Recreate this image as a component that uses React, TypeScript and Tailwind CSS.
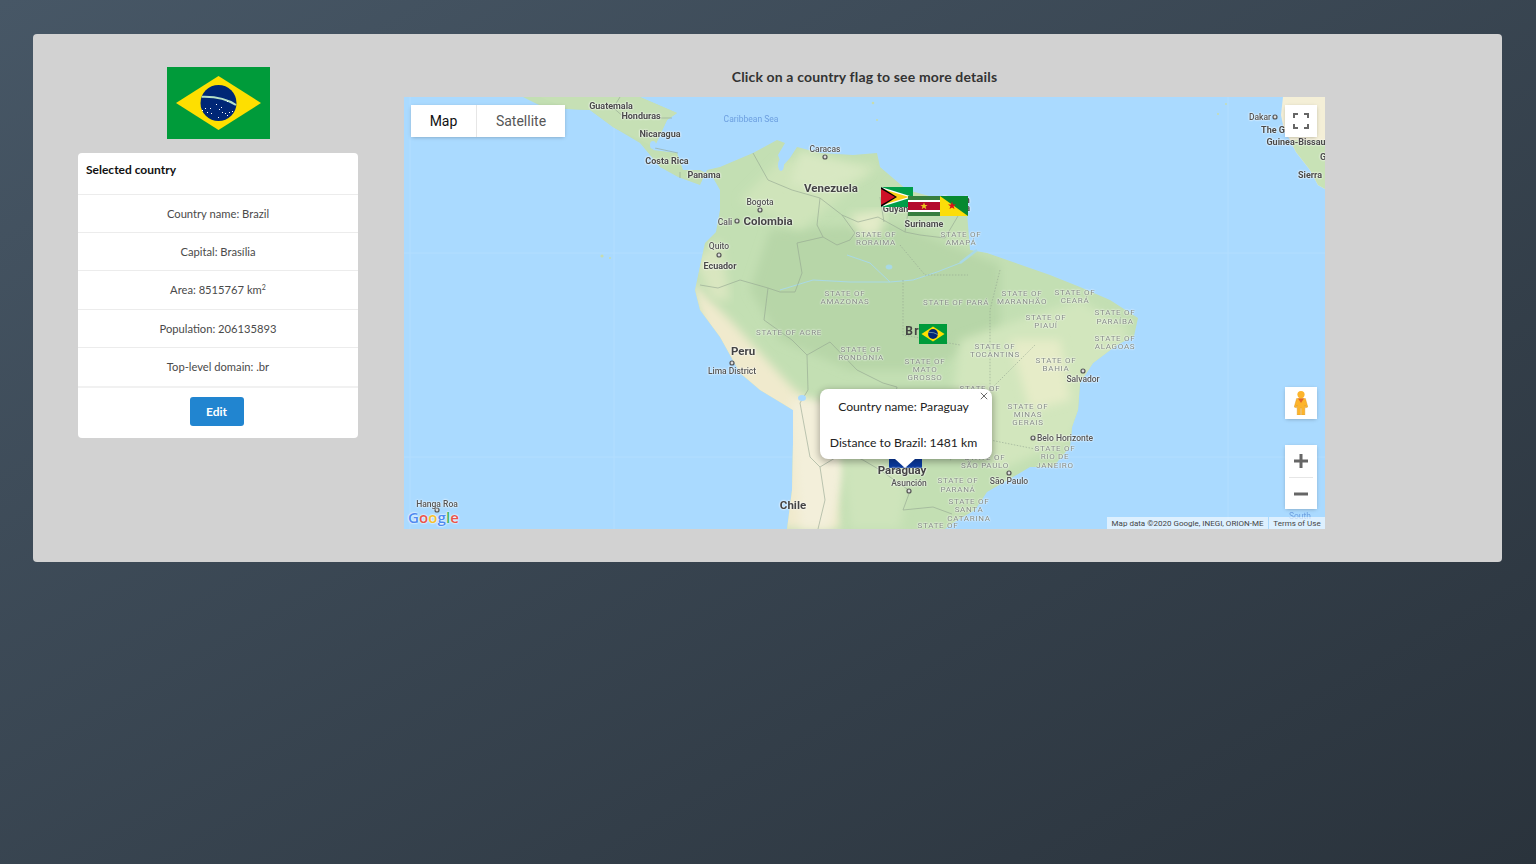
import React from "react";

type Kind = "country" | "big" | "wide" | "city" | "state" | "sea";
type MapLabel = { t: string; x: number; y: number; k: Kind };

const kindClass: Record<Kind, string> = {
  big: "text-[11.5px] font-bold text-[#444] blur-[0.3px] [text-shadow:0_0_2px_#fff,0_0_2px_#fff]",
  wide: "text-[12px] font-bold tracking-[1.5px] text-[#444] blur-[0.3px]",
  country: "text-[9px] font-bold text-[#4a4a4a] blur-[0.3px] [text-shadow:0_0_2px_#fff,0_0_2px_#fff]",
  city: "text-[8.5px] font-medium text-[#555] blur-[0.3px] [text-shadow:0_0_2px_#fff,0_0_2px_#fff]",
  state: "text-[8px] tracking-[0.7px] text-[#858c85] blur-[0.3px] [text-shadow:0_0_2px_#fff,0_0_2px_#fff]",
  sea: "text-[8.5px] text-[#6d9fe0] blur-[0.3px]",
};

const stateLines: [string, number, number][] = [
  ["STATE OF", 876, 235], ["RORAIMA", 876, 243],
  ["STATE OF", 961, 235], ["AMAPÁ", 961, 243],
  ["STATE OF", 845, 294], ["AMAZONAS", 845, 302],
  ["STATE OF PARÁ", 956, 303],
  ["STATE OF", 1022, 294], ["MARANHÃO", 1022, 302],
  ["STATE OF", 1075, 293], ["CEARÁ", 1075, 301],
  ["STATE OF", 1115, 313], ["PARAÍBA", 1115, 322],
  ["STATE OF", 1046, 318], ["PIAUÍ", 1046, 326],
  ["STATE OF", 1115, 339], ["ALAGOAS", 1115, 347],
  ["STATE OF ACRE", 789, 333],
  ["STATE OF", 861, 350], ["RONDÔNIA", 861, 358],
  ["STATE OF", 995, 347], ["TOCANTINS", 995, 355],
  ["STATE OF", 925, 362], ["MATO", 925, 370], ["GROSSO", 925, 378],
  ["STATE OF", 1056, 361], ["BAHIA", 1056, 369],
  ["STATE OF", 980, 389],
  ["STATE OF", 1028, 407], ["MINAS", 1028, 415], ["GERAIS", 1028, 423],
  ["STATE OF", 985, 458], ["SÃO PAULO", 985, 466],
  ["STATE OF", 1055, 449], ["RIO DE", 1055, 457], ["JANEIRO", 1055, 466],
  ["STATE OF", 958, 481], ["PARANÁ", 958, 490],
  ["STATE OF", 969, 502], ["SANTA", 969, 510], ["CATARINA", 969, 519],
  ["STATE OF", 938, 526],
];

const labels: MapLabel[] = [
  { t: "Guatemala", x: 611, y: 106, k: "country" },
  { t: "Honduras", x: 641, y: 116, k: "country" },
  { t: "Nicaragua", x: 660, y: 134, k: "country" },
  { t: "Costa Rica", x: 667, y: 161, k: "country" },
  { t: "Panama", x: 704, y: 175, k: "country" },
  { t: "Caribbean Sea", x: 751, y: 119, k: "sea" },
  { t: "Caracas", x: 825, y: 149, k: "city" },
  { t: "Venezuela", x: 831, y: 189, k: "big" },
  { t: "Bogota", x: 760, y: 202, k: "city" },
  { t: "Colombia", x: 768, y: 222, k: "big" },
  { t: "Cali", x: 725, y: 222, k: "city" },
  { t: "Quito", x: 719, y: 246, k: "city" },
  { t: "Ecuador", x: 720, y: 266, k: "country" },
  { t: "Guyana", x: 898, y: 209, k: "country" },
  { t: "French", x: 956, y: 200, k: "country" },
  { t: "Guiana", x: 956, y: 208, k: "country" },
  { t: "Suriname", x: 924, y: 224, k: "country" },
  { t: "Brazil", x: 925, y: 331, k: "wide" },
  { t: "Peru", x: 743, y: 352, k: "big" },
  { t: "Lima District", x: 732, y: 371, k: "city" },
  { t: "Chile", x: 793, y: 506, k: "big" },
  { t: "Paraguay", x: 902, y: 471, k: "big" },
  { t: "Asunción", x: 909, y: 483, k: "city" },
  { t: "São Paulo", x: 1009, y: 481, k: "city" },
  { t: "Salvador", x: 1083, y: 379, k: "city" },
  { t: "Belo Horizonte", x: 1065, y: 438, k: "city" },
  { t: "Dakar", x: 1260, y: 117, k: "city" },
  { t: "The G", x: 1273, y: 130, k: "country" },
  { t: "Guinea-Bissau", x: 1296, y: 142, k: "country" },
  { t: "G", x: 1323, y: 157, k: "country" },
  { t: "Sierra", x: 1310, y: 175, k: "country" },
  { t: "Hanga Roa", x: 437, y: 504, k: "city" },
  { t: "South", x: 1300, y: 516, k: "sea" },
  ...stateLines.map(([t, x, y]) => ({ t, x, y, k: "state" as Kind })),
];

const cities = [
  [825, 157], [760, 210], [737, 221], [719, 255], [732, 363], [909, 491],
  [1009, 473], [1083, 371], [1033, 438], [1275, 117], [437, 510],
];

const LAND =
  "523,97 545,108 590,110 613,127 640,143 660,167 678,177 700,185 707,170 720,167 753,153 777,140 785,143 778,155 782,167 790,158 797,147 820,153 853,155 877,153 880,167 907,190 933,197 967,213 970,250 987,253 1027,267 1050,275 1080,287 1110,300 1138,318 1134,336 1117,345 1093,363 1080,383 1078,410 1072,427 1070,447 1053,467 1030,467 1013,477 987,492 975,510 953,523 945,529 787,529 792,490 793,443 793,410 760,390 740,373 720,337 700,310 695,290 705,243 716,232 720,210 720,190 712,176 700,170 683,170 677,153 653,150 667,120 677,113 640,97";
const AFRICA = "1283,97 1281,115 1284,130 1290,140 1296,152 1310,170 1318,185 1325,189 1325,97";

const BrazilFlag = ({ detail }: { detail?: boolean }) => (
  <svg viewBox="0 0 103 72" preserveAspectRatio="none" className="block h-full w-full">
    <rect width="103" height="72" fill="#009b3a" />
    <polygon points="9,36 51.5,9 94,36 51.5,63" fill="#fedf00" />
    <circle cx="51.5" cy="36" r="18" fill="#002776" />
    <path d="M34.7 29.7 Q56 29 69 38" stroke="#b5e0c8" strokeWidth="2" fill="none" />
    {detail &&
      [[35, 43], [38, 41], [40, 45], [43, 41], [44, 46], [49, 37], [52, 42], [54, 40], [55, 45], [58, 46], [60, 48], [62, 45], [65, 44], [51, 50], [60, 34]].map(([x, y]) => (
        <rect key={`${x}-${y}`} x={x} y={y} width="1" height="1" fill="#fff" />
      ))}
  </svg>
);

const MapCanvas = () => (
  <svg viewBox="404 97 921 432" className="absolute inset-0 h-full w-full">
    <defs>
      <clipPath id="land">
        <polygon points={LAND} />
      </clipPath>
      <filter id="soft" x="-10%" y="-10%" width="120%" height="120%">
        <feGaussianBlur stdDeviation="5" />
      </filter>
      <filter id="softer" x="-10%" y="-10%" width="120%" height="120%">
        <feGaussianBlur stdDeviation="0.6" />
      </filter>
    </defs>
    <g stroke="#b3deff" strokeWidth="1">
      <line x1="410" y1="97" x2="410" y2="529" />
      <line x1="614" y1="97" x2="614" y2="529" />
      <line x1="1228" y1="97" x2="1228" y2="529" />
      <line x1="404" y1="253" x2="1325" y2="253" />
      <line x1="404" y1="457" x2="1325" y2="457" />
    </g>
    <polygon points={LAND} fill="#c3dfb3" filter="url(#softer)" />
    <polygon points={AFRICA} fill="#f4efd7" filter="url(#softer)" />
    <polygon points="1290,140 1296,152 1310,170 1318,185 1325,189 1325,140" fill="#c8e2b6" filter="url(#softer)" />
    <g clipPath="url(#land)">
      {/* amazon basin, a bit darker */}
      <polygon points="770,230 900,225 1000,265 1000,330 930,370 850,370 780,340 750,290" fill="#b7d6a8" filter="url(#soft)" />
      {/* drier east and south */}
      <polygon points="960,340 1080,300 1130,330 1070,440 1000,470 950,420" fill="#d2e6bd" filter="url(#soft)" />
      <polygon points="1010,340 1060,340 1070,400 1030,410" fill="#e6ecc8" filter="url(#soft)" />
      <polygon points="800,230 880,165 780,160 740,200" fill="#cfe4ba" filter="url(#soft)" />
      <polygon points="800,150 870,170 830,190 790,185" fill="#d8e8c2" filter="url(#soft)" />
      <polygon points="850,215 885,210 880,235 860,235" fill="#e3ebc8" filter="url(#soft)" />
      {/* andes and the pacific coast */}
      <polygon points="690,280 730,320 790,385 830,420 840,529 780,529 785,430 740,385 705,330" fill="#f0eacd" filter="url(#soft)" />
      <polygon points="790,400 830,400 845,470 830,529 800,529" fill="#f3efda" filter="url(#soft)" />
      <polygon points="840,430 910,470 900,529 850,529" fill="#cee4bb" filter="url(#soft)" />
      <polygon points="540,97 640,97 680,113 660,150 630,135" fill="#c6e0b5" />
      <polygon points="695,260 720,240 730,300 712,300" fill="#d9e6c0" filter="url(#soft)" />
    </g>
    {/* rivers */}
    <g fill="none" stroke="#a9d9e6" strokeWidth="1" filter="url(#softer)">
      <path d="M780 290 L813 280 L850 282 L890 282 L913 280 L937 272 L960 263 L977 250" />
      <path d="M847 255 L870 263 L890 282" />
      <path strokeWidth="2.5" d="M960 263 L977 250" />
      <ellipse cx="889" cy="267" rx="3" ry="2" fill="#a9d9e6" />
    </g>
    {/* country and state borders */}
    <g fill="none" stroke="#93a590" strokeWidth="0.8" opacity="0.75" filter="url(#softer)">
      <path d="M753 153 L768 180 L792 190 L820 198 L817 225 L823 237 L797 243 L802 273 L795 292 L780 292 L768 288 L740 280 L718 288 L700 285" />
      <path d="M820 198 L842 215 L858 222 L878 217 L905 232 L920 235 L945 238 L958 216" />
      <path d="M880 197 L884 222 M908 212 L905 232" />
      <path d="M823 237 L837 245 L850 240 L855 233 L842 215" />
      <path d="M768 288 L764 320 L792 340 L807 355 L808 390 L800 403" />
      <path d="M807 355 L830 342 L857 370 L883 383 L897 387 L890 420 L888 455" />
      <path d="M800 403 L805 430 L810 457 L820 467 L825 500 L818 529" />
      <path d="M820 467 L845 452 L863 460 L880 470 L910 491 L903 510 L933 507 L952 514" />
      <path d="M610 105 L625 118 L672 118 M655 148 L678 153 M680 172 L680 178 M620 97 L612 110" />
      <path strokeDasharray="1.5 1.5" d="M900 245 L925 275 L968 275 M1000 270 L990 310 L990 395 M985 395 L1035 345 M950 460 L990 440 L1040 450 M903 280 L903 335 L960 345" />
    </g>
    {/* lakes and odd islands */}
    <ellipse cx="802" cy="398" rx="4" ry="3" fill="#aadaff" />
    <ellipse cx="781" cy="165" rx="3" ry="6" fill="#aadaff" />
    <ellipse cx="653" cy="145" rx="3" ry="4" fill="#aadaff" />
    <g fill="#c6dcb0">
      <circle cx="602" cy="256" r="1.6" />
      <circle cx="610" cy="258" r="1" />
      <circle cx="873" cy="103" r="1.3" />
      <circle cx="877" cy="120" r="1" />
      <circle cx="1218" cy="114" r="1" />
      <circle cx="1226" cy="104" r="1" />
    </g>
    {cities.map(([x, y]) => (
      <circle key={`${x}-${y}`} cx={x} cy={y} r="2" fill="#ddd" stroke="#555" strokeWidth="1.2" />
    ))}
  </svg>
);

const Row = ({ children, h }: { children: React.ReactNode; h: string }) => (
  <div className={`flex items-center justify-center border-t border-[#ececec] text-[11.2px] text-[#4a4a4a] ${h}`}>
    {children}
  </div>
);

export default function App() {
  return (
    <div
      className="min-h-screen bg-linear-to-br from-[#475766] to-[#2a333c] pl-[33px] pr-[34px] pt-[34px]"
      style={{ fontFamily: "Lato, sans-serif" }}
    >
      <div className="flex h-[528px] rounded-[4px] bg-[#d2d2d2] pt-[33px]">
        <div className="ml-[45px] flex w-[280px] flex-col items-center">
          <div className="h-[72px] w-[103px]">
            <BrazilFlag detail />
          </div>
          <div className="mt-[14px] flex h-[285px] w-full flex-col rounded-[4px] bg-white">
            <div className="h-[41px] pl-2 pt-[8px] text-[12px] font-bold leading-[18px] text-[#111]">
              Selected country
            </div>
            <Row h="h-[38px] pt-[2px]">Country name: Brazil</Row>
            <Row h="h-[38px] pt-[2px]">Capital: Brasília</Row>
            <Row h="h-[39px]">
              Area: 8515767 km<sup className="text-[7px]">2</sup>
            </Row>
            <Row h="h-[38px] pt-[2px]">Population: 206135893</Row>
            <Row h="h-[39px]">Top-level domain: .br</Row>
            <div className="flex flex-1 justify-center border-t-2 border-[#f1f1f1] pr-[3px] pt-[9px]">
              <button className="h-[29px] w-[54px] rounded-[3px] bg-[#2185d0] text-[12px] font-bold text-white">
                Edit
              </button>
            </div>
          </div>
        </div>
        <div className="ml-[46px] flex w-[921px] flex-col">
          <div className="mb-[12px] flex h-[18px] items-center justify-center text-[14px] font-bold tracking-[0.15px] text-[#333]">
            Click on a country flag to see more details
          </div>
          <div className="relative h-[432px] overflow-hidden bg-[#aadaff]" style={{ fontFamily: "Roboto, sans-serif" }}>
            <MapCanvas />
            <div className="absolute left-[485px] top-[362px] h-[9px] w-[33px] bg-[#0a3a9e]" />
            {labels.map((l) => (
              <span
                key={`${l.t}-${l.x}-${l.y}`}
                className={`absolute -translate-x-1/2 -translate-y-1/2 whitespace-nowrap leading-none ${kindClass[l.k]}`}
                style={{ left: l.x - 404, top: l.y - 97 }}
              >
                {l.t}
              </span>
            ))}

            {/* flag markers */}
            <div className="absolute left-[477px] top-[90px] h-[20px] w-[32px]">
              <svg viewBox="0 0 32 20" preserveAspectRatio="none" className="block h-full w-full">
                <rect width="32" height="20" fill="#009e49" />
                <polygon points="0,0 32,10 0,20" fill="#fff" />
                <polygon points="0,1.5 28,10 0,18.5" fill="#fcd116" />
                <polygon points="0,0 16,10 0,20" fill="#000" />
                <polygon points="0,2 14,10 0,18" fill="#ce1126" />
              </svg>
            </div>
            <div className="absolute left-[536px] top-[99px] h-[20px] w-[28px]">
              <svg viewBox="0 0 28 20" preserveAspectRatio="none" className="block h-full w-full">
                <rect width="28" height="20" fill="#078930" />
                <polygon points="0,0 28,20 0,20" fill="#fcdd09" />
                <polygon points="12,5.5 13,8.5 16,8.5 13.6,10.3 14.5,13 12,11.4 9.5,13 10.4,10.3 8,8.5 11,8.5" fill="#da121a" />
              </svg>
            </div>
            <div className="absolute left-[504px] top-[99px] h-[20px] w-[32px]">
              <svg viewBox="0 0 32 20" preserveAspectRatio="none" className="block h-full w-full">
                <rect width="32" height="20" fill="#377e3f" />
                <rect y="4" width="32" height="12" fill="#fff" />
                <rect y="6" width="32" height="8" fill="#b40a2d" />
                <polygon points="16,6.5 17,9 19.6,9 17.5,10.6 18.3,13.2 16,11.6 13.7,13.2 14.5,10.6 12.4,9 15,9" fill="#ecc81d" />
              </svg>
            </div>
            <div className="absolute left-[515px] top-[227px] h-[20px] w-[28px]">
              <BrazilFlag />
            </div>

            {/* info window */}
            <div className="absolute left-[416px] top-[292px] h-[70px] w-[172px] rounded-[8px] bg-white pr-[5px] text-center text-[12.2px] leading-[18px] text-[#222] shadow-[0_2px_7px_1px_rgba(0,0,0,0.3)]" style={{ fontFamily: "Lato, sans-serif" }}>
              <div className="pt-[9px]">Country name: Paraguay</div>
              <div className="pt-[18px]">Distance to Brazil: 1481 km</div>
              <svg viewBox="0 0 10 10" className="absolute right-[4px] top-[3px] h-[8px] w-[8px]">
                <path d="M1 1 L9 9 M9 1 L1 9" stroke="#555" strokeWidth="1.1" />
              </svg>
              <div className="absolute left-[75px] top-[70px] h-0 w-0 border-x-[10px] border-t-[9px] border-x-transparent border-t-white" />
            </div>

            {/* map type control */}
            <div className="absolute left-[7px] top-[8px] flex h-[32px] w-[154px] bg-white text-[14px] shadow-[0_1px_4px_-1px_rgba(0,0,0,0.3)]">
              <div className="flex w-[66px] items-center justify-center border-r border-[#e6e6e6] text-[#111]">
                Map
              </div>
              <div className="flex flex-1 items-center justify-center text-[#565656]">Satellite</div>
            </div>

            {/* fullscreen */}
            <div className="absolute left-[881px] top-[8px] flex h-[32px] w-[32px] items-center justify-center bg-white shadow-[0_1px_4px_-1px_rgba(0,0,0,0.3)]">
              <svg viewBox="0 0 16 16" className="h-[16px] w-[16px]">
                <path d="M1 5 V1 H5 M11 1 H15 V5 M15 11 V15 H11 M5 15 H1 V11" fill="none" stroke="#666" strokeWidth="2" />
              </svg>
            </div>

            {/* pegman */}
            <div className="absolute left-[881px] top-[290px] flex h-[32px] w-[32px] items-center justify-center bg-white shadow-[0_1px_4px_-1px_rgba(0,0,0,0.3)]">
              <svg viewBox="0 0 14 24" className="h-[24px] w-[14px]">
                <circle cx="7" cy="3.6" r="3.6" fill="#fdb42b" />
                <path d="M2.6 7.5 H11.4 L13.8 16 L11.6 16.8 L10.8 14 V24 H7.5 V17 H6.5 V24 H3.2 V14 L2.4 16.8 L0.2 16 Z" fill="#fdb42b" stroke="#d9921a" strokeWidth="0.4" />
                <path d="M4 7.5 L7 12 L10 7.5 Z" fill="#e2662a" />
              </svg>
            </div>

            {/* zoom */}
            <div className="absolute left-[881px] top-[348px] flex h-[64px] w-[32px] flex-col bg-white shadow-[0_1px_4px_-1px_rgba(0,0,0,0.3)]">
              <div className="flex h-[32px] items-center justify-center">
                <svg viewBox="0 0 16 16" className="h-[16px] w-[16px]">
                  <path d="M1 8 H15 M8 1 V15" stroke="#666" strokeWidth="3" />
                </svg>
              </div>
              <div className="mx-[4px] h-px bg-[#e6e6e6]" />
              <div className="flex flex-1 items-center justify-center">
                <svg viewBox="0 0 16 16" className="h-[16px] w-[16px]">
                  <path d="M1 8 H15" stroke="#666" strokeWidth="3" />
                </svg>
              </div>
            </div>

            {/* google logo */}
            <div className="absolute left-[4px] top-[410px] text-[15px] font-semibold leading-[20px] tracking-[0.1px] [text-shadow:0_0_2px_#fff,0_0_2px_#fff]" style={{ fontFamily: '"Open Sans", sans-serif' }}>
              <span className="text-[#4f8af0]">G</span>
              <span className="text-[#e8534a]">o</span>
              <span className="text-[#f5c02c]">o</span>
              <span className="text-[#4f8af0]">g</span>
              <span className="text-[#3fb45f]">l</span>
              <span className="text-[#e8534a]">e</span>
            </div>

            {/* attribution */}
            <div className="absolute bottom-0 right-0 flex h-[12px] items-center whitespace-nowrap text-[8px] leading-none text-[#444]">
              <div className="flex h-full w-[161px] items-center justify-center bg-white/60 pt-px">Map data ©2020 Google, INEGI, ORION-ME</div>
              <div className="ml-px flex h-full w-[56px] items-center justify-center bg-white/60 pt-px">Terms of Use</div>
            </div>
          </div>
        </div>
      </div>
    </div>
  );
}
